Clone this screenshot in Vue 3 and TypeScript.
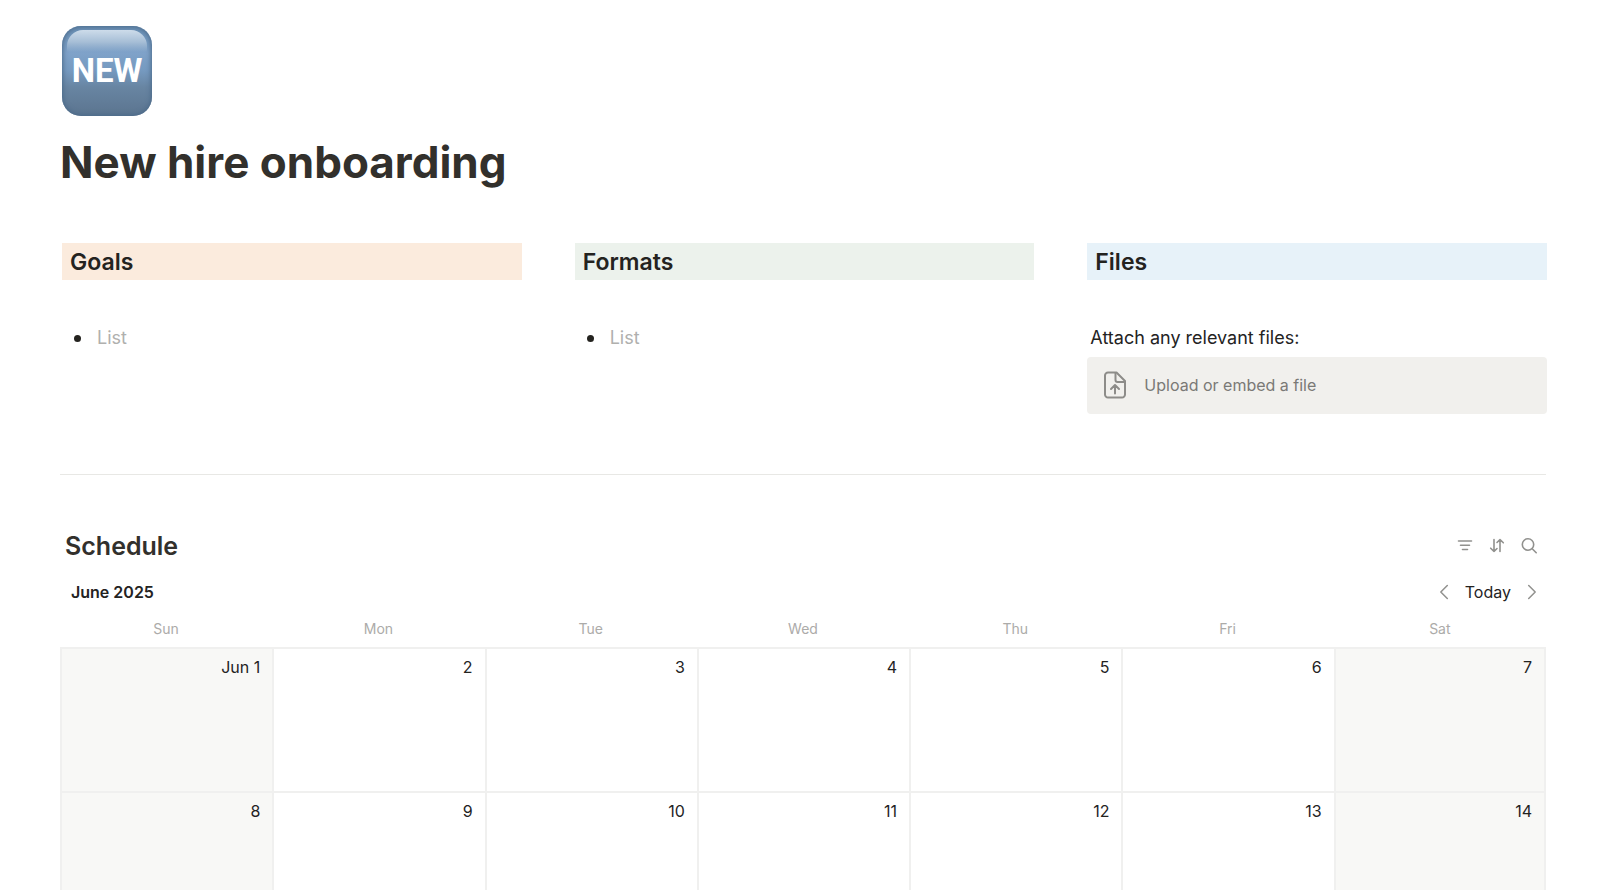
<script setup lang="ts">
interface ListSection {
  title: string
  tone: string
}

const listSections: ListSection[] = [
  { title: 'Goals', tone: 'orange' },
  { title: 'Formats', tone: 'green' },
]

const weekdays: string[] = ['Sun', 'Mon', 'Tue', 'Wed', 'Thu', 'Fri', 'Sat']

const weeks: string[][] = [
  ['Jun 1', '2', '3', '4', '5', '6', '7'],
  ['8', '9', '10', '11', '12', '13', '14'],
]

const isWeekend = (index: number): boolean => index === 0 || index === 6
</script>

<template>
  <main class="page">
    <div class="badge"><span>NEW</span></div>
    <h1 class="title">New hire onboarding</h1>

    <div class="columns">
      <section v-for="section in listSections" :key="section.title">
        <h2 class="band" :class="section.tone">{{ section.title }}</h2>
        <ul class="list">
          <li>List</li>
        </ul>
      </section>
      <section>
        <h2 class="band blue">Files</h2>
        <p class="note">Attach any relevant files:</p>
        <button class="upload" type="button">
          <svg width="24" height="28" viewBox="0 0 24 28" fill="none" stroke="currentColor" stroke-width="2" stroke-linecap="round" stroke-linejoin="round">
            <path d="M5 1.5h8.5L22 10v13.5a3 3 0 0 1-3 3H5a3 3 0 0 1-3-3v-19a3 3 0 0 1 3-3z" />
            <path d="M12.5 2v7a2 2 0 0 0 2 2H22" />
            <path d="M12 22.5v-8M8 18l4-4 4 4" />
          </svg>
          <span>Upload or embed a file</span>
        </button>
      </section>
    </div>

    <hr class="divider" />

    <section class="schedule">
      <header class="bar heading-bar">
        <h2>Schedule</h2>
        <div class="tools">
          <button type="button" aria-label="Filter">
            <svg width="16" height="16" viewBox="0 0 16 16" fill="none" stroke="currentColor" stroke-width="1.6" stroke-linecap="round">
              <path d="M1.5 3h13M3.5 7.2h9M5.5 11.5h5" />
            </svg>
          </button>
          <button type="button" aria-label="Sort">
            <svg width="16" height="16" viewBox="0 0 16 16" fill="none" stroke="currentColor" stroke-width="1.6" stroke-linecap="round" stroke-linejoin="round">
              <path d="M5 1.5v12M1.7 10.2L5 13.5l3-3M11 13.5v-12M8 4.5l3-3 3.3 3.3" />
            </svg>
          </button>
          <button type="button" aria-label="Search">
            <svg width="16" height="16" viewBox="0 0 16 16" fill="none" stroke="currentColor" stroke-width="1.6" stroke-linecap="round">
              <circle cx="7" cy="6.5" r="5.7" />
              <path d="M11.2 10.7l4 4" />
            </svg>
          </button>
        </div>
      </header>

      <div class="bar month-bar">
        <h3>June 2025</h3>
        <div class="pager">
          <button type="button" aria-label="Previous month">
            <svg width="10" height="16" viewBox="0 0 10 16" fill="none" stroke="currentColor" stroke-width="1.5" stroke-linecap="round" stroke-linejoin="round">
              <path d="M8.3 1.5L1.8 8l6.5 6.5" />
            </svg>
          </button>
          <button class="today" type="button">Today</button>
          <button type="button" aria-label="Next month">
            <svg width="10" height="16" viewBox="0 0 10 16" fill="none" stroke="currentColor" stroke-width="1.5" stroke-linecap="round" stroke-linejoin="round">
              <path d="M1.7 1.5L8.2 8l-6.5 6.5" />
            </svg>
          </button>
        </div>
      </div>

      <table class="calendar">
        <thead>
          <tr>
            <th v-for="day in weekdays" :key="day" scope="col">{{ day }}</th>
          </tr>
        </thead>
        <tbody>
          <tr v-for="week in weeks" :key="week[0]">
            <td v-for="(date, index) in week" :key="date" :class="{ weekend: isWeekend(index) }">{{ date }}</td>
          </tr>
        </tbody>
      </table>
    </section>
  </main>
</template>

<style>
html,
body {
  background: #fff;
}
</style>

<style scoped>
.page {
  box-sizing: border-box;
  height: 100vh;
  overflow: hidden;
  padding: 26px 54px 0 60px;
  font-family: Inter, "Liberation Sans", sans-serif;
  color: #24231f;
}

h1,
h2,
h3,
p,
ul {
  margin: 0;
  padding: 0;
}

button {
  border: 0;
  padding: 0;
  background: none;
  font: inherit;
  color: #91918e;
  cursor: pointer;
}

svg {
  display: block;
}

.badge {
  position: relative;
  display: flex;
  align-items: center;
  justify-content: center;
  box-sizing: border-box;
  width: 90px;
  height: 90px;
  margin-left: 2px;
  border-radius: 19px;
  background: linear-gradient(#6a90b5, #7fa2c9 30%, #7599bf 50%, #6885a2 68%, #5b748f);
  box-shadow: inset 0 0 5px 1px #4b6a8a;
}

.badge::before {
  content: "";
  position: absolute;
  inset: 4px 5px auto;
  height: 22px;
  border-radius: 16px 16px 0 0;
  background: linear-gradient(#cddcea, #a6bed6 55%, #7fa2c900);
}

.badge span {
  position: relative;
  font: 700 33px/36px Roboto, "Open Sans", sans-serif;
  color: #fff;
}

.title {
  margin-top: 18px;
  font-size: 44px;
  line-height: 56px;
  font-weight: 700;
  color: #32302c;
}

.columns {
  display: grid;
  grid-template-columns: repeat(3, 1fr);
  gap: 53px;
  margin: 53px -1px 0 2px;
}

.band {
  padding: 1px 8px 0;
  font-size: 23px;
  line-height: 36px;
  font-weight: 600;
}

.orange {
  background: #fbebdd;
}

.green {
  background: #ecf2ec;
}

.blue {
  background: #e7f2f9;
}

.list {
  margin-top: 44px;
  padding: 0 12px;
  list-style: none;
  font-size: 18px;
  line-height: 28px;
  color: #b0b0ae;
}

.list li {
  display: flex;
  align-items: center;
  gap: 16px;
}

.list li::before {
  content: "";
  width: 7px;
  height: 7px;
  border-radius: 50%;
  background: #24231f;
}

.note {
  margin-top: 44px;
  padding: 0 3px;
  font-size: 18px;
  line-height: 28px;
}

.upload {
  display: flex;
  align-items: center;
  gap: 17px;
  width: 100%;
  height: 57px;
  margin-top: 5px;
  padding: 0 16px 1px;
  border-radius: 4px;
  background: #f1f0ed;
  font-size: 16px;
  color: #8d8c89;
}

.upload span {
  color: #7a7976;
}

.divider {
  height: 1px;
  margin: 60px 0 0;
  border: 0;
  background: #e8e8e5;
}

.schedule {
  margin-top: 54px;
}

.bar {
  display: flex;
  align-items: center;
  justify-content: space-between;
}

.heading-bar {
  padding: 0 9px 0 5px;
}

.heading-bar h2 {
  font-size: 25px;
  line-height: 34px;
  font-weight: 600;
  color: #32302c;
}

.tools {
  display: flex;
  gap: 16px;
}

.month-bar {
  margin-top: 15px;
  padding: 0 9px 0 11px;
}

.month-bar h3 {
  font-size: 16px;
  line-height: 28px;
  font-weight: 600;
}

.pager {
  display: flex;
  align-items: center;
  gap: 16px;
}

.pager .today {
  font-size: 16px;
  line-height: 28px;
  color: #24231f;
}

.calendar {
  width: 100%;
  table-layout: fixed;
  border-collapse: separate;
  border-spacing: 0;
}

.calendar th {
  height: 43px;
  box-sizing: border-box;
  padding: 5px 0 0;
  font-size: 14px;
  line-height: 20px;
  font-weight: 400;
  color: #acaba9;
  border-bottom: 2px solid #f0f0ef;
}

.calendar td {
  box-sizing: border-box;
  height: 144px;
  padding: 6px 12px;
  border-left: 2px solid #f0f0ef;
  border-bottom: 2px solid #f0f0ef;
  font-size: 16px;
  line-height: 24px;
  text-align: right;
  vertical-align: top;
}

.calendar td:last-child {
  border-right: 2px solid #f0f0ef;
}

.calendar .weekend {
  background: #f8f8f6;
}
</style>
